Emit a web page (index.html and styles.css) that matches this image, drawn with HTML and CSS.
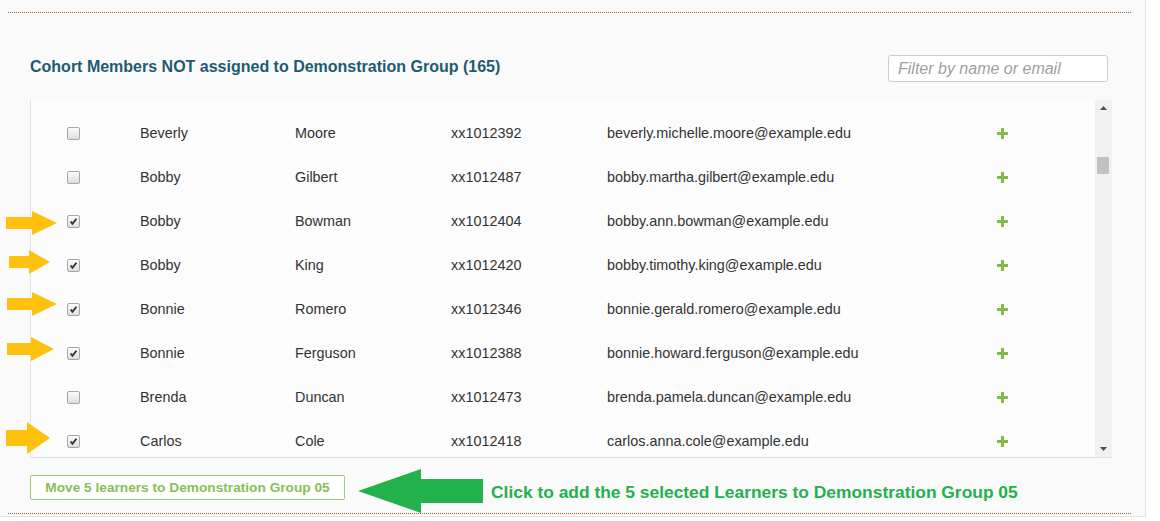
FILE: index.html
```html
<!DOCTYPE html>
<html>
<head>
<meta charset="utf-8">
<link rel="stylesheet" href="styles.css">
</head>
<body>
<div class="panel">
  <div class="rule"></div>
  <div class="content">
    <div class="header">
      <h2 class="title">Cohort Members NOT assigned to Demonstration Group (165)</h2>
      <input class="filter" type="text" placeholder="Filter by name or email">
    </div>
    <div class="table">
      <div class="rows">
        <div class="row"><span class="cb"></span><span>Beverly</span><span>Moore</span><span>xx1012392</span><span>beverly.michelle.moore@example.edu</span><svg class="plus" viewBox="0 0 11 11"><path d="M4 0h3v4h4v3H7v4H4V7H0V4h4z"/></svg></div>
        <div class="row"><span class="cb"></span><span>Bobby</span><span>Gilbert</span><span>xx1012487</span><span>bobby.martha.gilbert@example.edu</span><svg class="plus" viewBox="0 0 11 11"><path d="M4 0h3v4h4v3H7v4H4V7H0V4h4z"/></svg></div>
        <div class="row"><span class="cb on"><svg viewBox="0 0 13 13"><path d="M3 6.5l2.3 2.6L10 3.2" /></svg></span><span>Bobby</span><span>Bowman</span><span>xx1012404</span><span>bobby.ann.bowman@example.edu</span><svg class="plus" viewBox="0 0 11 11"><path d="M4 0h3v4h4v3H7v4H4V7H0V4h4z"/></svg></div>
        <div class="row"><span class="cb on"><svg viewBox="0 0 13 13"><path d="M3 6.5l2.3 2.6L10 3.2" /></svg></span><span>Bobby</span><span>King</span><span>xx1012420</span><span>bobby.timothy.king@example.edu</span><svg class="plus" viewBox="0 0 11 11"><path d="M4 0h3v4h4v3H7v4H4V7H0V4h4z"/></svg></div>
        <div class="row"><span class="cb on"><svg viewBox="0 0 13 13"><path d="M3 6.5l2.3 2.6L10 3.2" /></svg></span><span>Bonnie</span><span>Romero</span><span>xx1012346</span><span>bonnie.gerald.romero@example.edu</span><svg class="plus" viewBox="0 0 11 11"><path d="M4 0h3v4h4v3H7v4H4V7H0V4h4z"/></svg></div>
        <div class="row"><span class="cb on"><svg viewBox="0 0 13 13"><path d="M3 6.5l2.3 2.6L10 3.2" /></svg></span><span>Bonnie</span><span>Ferguson</span><span>xx1012388</span><span>bonnie.howard.ferguson@example.edu</span><svg class="plus" viewBox="0 0 11 11"><path d="M4 0h3v4h4v3H7v4H4V7H0V4h4z"/></svg></div>
        <div class="row"><span class="cb"></span><span>Brenda</span><span>Duncan</span><span>xx1012473</span><span>brenda.pamela.duncan@example.edu</span><svg class="plus" viewBox="0 0 11 11"><path d="M4 0h3v4h4v3H7v4H4V7H0V4h4z"/></svg></div>
        <div class="row"><span class="cb on"><svg viewBox="0 0 13 13"><path d="M3 6.5l2.3 2.6L10 3.2" /></svg></span><span>Carlos</span><span>Cole</span><span>xx1012418</span><span>carlos.anna.cole@example.edu</span><svg class="plus" viewBox="0 0 11 11"><path d="M4 0h3v4h4v3H7v4H4V7H0V4h4z"/></svg></div>
      </div>
      <div class="scrollbar">
        <div class="sb-btn"><svg viewBox="0 0 17 17"><path d="M5 10h7l-3.5-4z"/></svg></div>
        <div class="sb-track"><div class="sb-thumb"></div></div>
        <div class="sb-btn"><svg viewBox="0 0 17 17"><path d="M5 7h7l-3.5 4z"/></svg></div>
      </div>
    </div>
    <div class="actions">
      <button class="move">Move 5 learners to Demonstration Group 05</button>
      <svg class="green-arrow" viewBox="0 0 125 44"><path d="M0 22L63 0V10H125V34H63V44Z"/></svg>
      <span class="hint">Click to add the 5 selected Learners to Demonstration Group 05</span>
    </div>
  </div>
  <div class="rule"></div>

  <svg class="yarrow a1" viewBox="0 0 51 24"><path d="M0 6H26V0L51 12L26 24V18H0Z"/></svg>
  <svg class="yarrow a2" viewBox="0 0 41 24"><path d="M0 6H20V0L41 12L20 24V18H0Z"/></svg>
  <svg class="yarrow a3" viewBox="0 0 50 24"><path d="M0 6H25V0L50 12L25 24V18H0Z"/></svg>
  <svg class="yarrow a4" viewBox="0 0 47 24"><path d="M0 6H24V0L47 12L24 24V18H0Z"/></svg>
  <svg class="yarrow a5" viewBox="0 0 44 32"><path d="M0 8H21V0L44 16L21 32V24H0Z"/></svg>
</div>
</body>
</html>
```

FILE: styles.css
```css
* { box-sizing: border-box; }
html, body { margin: 0; padding: 0; background: #ffffff; }
body { font-family: "Liberation Sans", Arial, sans-serif; color: #333; }

.panel {
  position: relative;
  width: 1146px;
  height: 517px;
  background: #fafafa;
  border-right: 1px solid #e4e4e4;
  border-bottom: 1px solid #e4e4e4;
  padding: 12px 13px 2px 8px;
}

.rule {
  height: 1px;
  background: repeating-linear-gradient(to right, #a0663a 0 1px, transparent 1px 2px);
}

.content {
  padding: 0 20px 0 22px;
}

.header {
  display: flex;
  justify-content: space-between;
  align-items: center;
  margin-top: 42px;
  height: 27px;
  padding-right: 4px;
}

.title {
  margin: 0 0 3px 0;
  font-size: 16px;
  line-height: 18px;
  font-weight: bold;
  color: #1f5a73;
}

.filter {
  width: 220px;
  height: 27px;
  border: 1px solid #cccccc;
  border-radius: 3px;
  background: #fff;
  padding: 0 9px;
  font-family: "Liberation Sans", Arial, sans-serif;
  font-size: 16px;
  font-style: italic;
  outline: none;
}
.filter::placeholder { color: #a0a0a0; }

.table {
  display: flex;
  margin-top: 18px;
  height: 358px;
  border-left: 1px solid #e2e2e2;
  border-bottom: 1px solid #e2e2e2;
  overflow: hidden;
  background: #fcfcfc;
}

.rows {
  flex: 1;
  padding-top: 11px;
}

.row {
  display: grid;
  grid-template-columns: 109px 155px 156px 156px 390px 11px;
  align-items: center;
  height: 44px;
  font-size: 14.4px;
  color: #333;
}

.cb {
  display: block;
  width: 13px;
  height: 13px;
  margin-left: 36px;
  border: 1px solid #a6a6a6;
  border-radius: 2px;
  background: linear-gradient(#fbfbfb, #dedede);
}
.cb svg { display: block; width: 11px; height: 11px; }
.cb svg path { fill: none; stroke: #333; stroke-width: 2.2; }

.plus { display: block; width: 11px; height: 11px; }
.plus path { fill: #82bb45; }

.scrollbar {
  width: 17px;
  display: flex;
  flex-direction: column;
  background: #f1f1f1;
}
.sb-btn { height: 17px; }
.sb-btn svg { display: block; width: 17px; height: 17px; }
.sb-btn path { fill: #505050; }
.sb-track { flex: 1; }
.sb-thumb {
  margin: 40px 3px 0 2px;
  height: 17px;
  background: #c1c1c1;
}

.actions {
  display: flex;
  align-items: flex-start;
  margin-top: 17px;
  height: 38px;
}

.move {
  height: 25px;
  width: 315px;
  padding: 0;
  border: 1px solid #9fcc72;
  border-radius: 2px;
  background: #ffffff;
  color: #88c057;
  font-family: "Liberation Sans", Arial, sans-serif;
  font-size: 13.7px;
  font-weight: bold;
}

.green-arrow {
  width: 125px;
  height: 44px;
  margin-top: -6px;
  margin-left: 13px;
}
.green-arrow path { fill: #22b14c; }

.hint {
  margin-left: 8px;
  margin-top: 7px;
  line-height: 20px;
  font-size: 17.4px;
  font-weight: bold;
  color: #22b14c;
}

.yarrow { position: absolute; height: 24px; }
.yarrow path { fill: #fec20e; }
.a1 { left: 6px; top: 211px; width: 51px; }
.a2 { left: 9px; top: 250px; width: 41px; }
.a3 { left: 7px; top: 292px; width: 50px; }
.a4 { left: 7px; top: 337px; width: 47px; }
.a5 { left: 6px; top: 422px; width: 44px; height: 32px; }
```
